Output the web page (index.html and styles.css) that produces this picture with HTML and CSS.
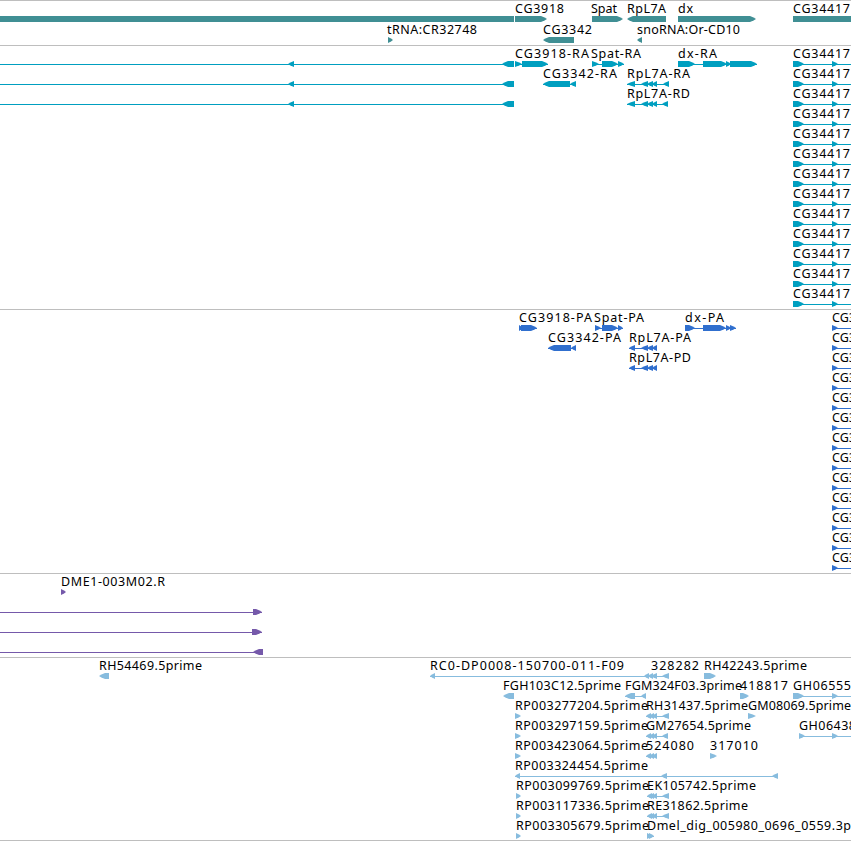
FILE: index.html
```
<!DOCTYPE html>
<html lang="en">
<head>
  <meta charset="UTF-8">
  <title>Genome tracks</title>
  <link rel="stylesheet" href="styles.css">
</head>
<body>
  <main class="tracks">
    <section class="track genes" id="genes"></section>
    <section class="track transcripts" id="transcripts"></section>
    <section class="track proteins" id="proteins"></section>
    <section class="track clones" id="clones"></section>
    <section class="track ests" id="ests"></section>
  </main>
  <script src="tracks.js"></script>
</body>
</html>
```

FILE: styles.css
```
body {
  margin: 0;
  background: #fff;
}
.tracks {
  display: flex;
  flex-direction: column;
  width: 851px;
  height: 840px;
  overflow: hidden;
  border-bottom: 1px solid #bebebe;
}
.track {
  box-sizing: border-box;
  flex: none;
  border-top: 1px solid #bebebe;
}
.track svg {
  display: block;
  width: 100%;
  height: 100%;
}
.track text {
  font-family: "Noto Sans", "DejaVu Sans", sans-serif;
  font-size: 12.5px;
  fill: #000;
}
.genes {
  height: 45px;
  color: #408f94;
}
.transcripts {
  height: 264px;
  color: #009fc0;
}
.proteins {
  height: 264px;
  color: #306fce;
}
.clones {
  height: 84px;
  color: #7559aa;
}
.ests {
  height: 183px;
  color: #87bcde;
}
.exon,
.intron {
  fill: currentColor;
}
.intron {
  shape-rendering: crispEdges;
}
```

FILE: tracks.js
```
const NS = 'http://www.w3.org/2000/svg';
const END = 851;

// feature: [row, direction, exons, label, label start, label end]
// direction: 1 = forward, -1 = reverse, 0 = runs past the view
const rpl = [[627, 635], [641, 648], [647, 653], [652, 657]];
const tracks = {
  genes: [
    [0, 0, [[0, 514]]],
    [0, 1, [[515, 547]], 'CG3918', 515, 564],
    [0, 1, [[592, 623]], 'Spat', 591, 617],
    [0, -1, [[627, 666]], 'RpL7A', 627, 666],
    [0, 1, [[678, 756]], 'dx', 678, 693],
    [0, 0, [[793, END]], 'CG34417', 793, 850],
    [1, 1, [[388, 393]], 'tRNA:CR32748', 387, 477],
    [1, -1, [[543, 574]], 'CG3342', 543, 592],
    [1, -1, [[637, 642]], 'snoRNA:Or-CD10', 637, 740]
  ],
  transcripts: [
    [0, -1, [[-9, 0], [288, 294], [502, 514]]],
    [1, -1, [[-9, 0], [288, 294], [502, 514]]],
    [2, -1, [[-9, 0], [288, 294], [502, 514]]],
    [0, 1, [[515, 522], [522, 548]], 'CG3918-RA', 515, 589],
    [0, 1, [[592, 599], [602, 618], [618, 624]], 'Spat-RA', 591, 641],
    [0, 1, [[678, 695], [703, 727], [726, 731], [730, 757]], 'dx-RA', 678, 717],
    [1, -1, [[543, 570], [570, 576]], 'CG3342-RA', 543, 617],
    [1, -1, [...rpl, [663, 669]], 'RpL7A-RA', 627, 690],
    [2, -1, [...rpl, [662, 668]], 'RpL7A-RD', 627, 690]
  ],
  proteins: [
    [0, 1, [[519, 523], [521, 537]], 'CG3918-PA', 519, 592],
    [0, 1, [[595, 601], [602, 618], [618, 623]], 'Spat-PA', 594, 644],
    [0, 1, [[685, 695], [703, 726], [726, 731], [730, 736]], 'dx-PA', 685, 724],
    [1, -1, [[548, 571], [571, 576]], 'CG3342-PA', 548, 621],
    [1, -1, [[629, 635], ...rpl.slice(1)], 'RpL7A-PA', 629, 691],
    [2, -1, [[629, 635], ...rpl.slice(1)], 'RpL7A-PD', 629, 691]
  ],
  clones: [
    [0, 1, [[61, 66]], 'DME1-003M02.R', 61, 165],
    [1, 1, [[-9, 0], [253, 262]]],
    [2, 1, [[-9, 0], [252, 262]]],
    [3, -1, [[-9, 0], [253, 263]]]
  ],
  ests: [
    [0, -1, [[99, 109]], 'RH54469.5prime', 99, 202],
    [0, -1, [[430, 435], [644, 649]], 'RC0-DP0008-150700-011-F09', 430, 624],
    [0, -1, [[648, 653], [651, 657], [662, 669]], '328282', 651, 699],
    [0, 1, [[704, 716]], 'RH42243.5prime', 704, 807],
    [1, -1, [[503, 514]], 'FGH103C12.5prime', 503, 621],
    [1, -1, [[625, 635], [641, 646]], 'FGM324F03.3prime', 625, 742],
    [1, 1, [[740, 749]], '418817', 740, 788],
    [1, 1, [[793, 804], [832, 838], [860, 870]], 'GH06555', 793, 851],
    [2, 1, [[515, 521]], 'RP003277204.5prime', 515, 648],
    [2, -1, [[646, 651], [649, 654], [652, 657], [662, 669]], 'RH31437.5prime', 646, 748],
    [2, 1, [[748, 756]], 'GM08069.5prime', 748, 851],
    [3, 1, [[515, 521]], 'RP003297159.5prime', 515, 648],
    [3, -1, [[646, 651], [649, 654], [652, 657], [662, 668]], 'GM27654.5prime', 646, 751],
    [3, 1, [[799, 805], [832, 838], [860, 870]], 'GH06438', 799, 856],
    [4, 1, [[515, 521]], 'RP003423064.5prime', 515, 648],
    [4, -1, [[646, 651], [649, 654], [652, 657]], '524080', 646, 694],
    [4, 1, [[710, 717]], '317010', 710, 758],
    [5, -1, [[515, 520], [661, 667], [772, 778]], 'RP003324454.5prime', 515, 648],
    [6, 1, [[516, 521]], 'RP003099769.5prime', 516, 649],
    [6, -1, [[647, 652], [649, 654], [652, 657], [662, 669]], 'EK105742.5prime', 647, 756],
    [7, 1, [[516, 521]], 'RP003117336.5prime', 516, 649],
    [7, -1, [[647, 652], [649, 654], [652, 657], [662, 669]], 'RE31862.5prime', 647, 748],
    [8, 1, [[516, 521]], 'RP003305679.5prime', 516, 649],
    [8, 1, [[647, 652], [649, 654]], 'Dmel_dig_005980_0696_0559.3p', 647, 851]
  ]
};

// CG34417 has the same start in all of its 13 isoforms
for (let row = 0; row < 13; row++) {
  tracks.transcripts.push([row, 1, [[793, 804], [832, 838], [860, 870]], 'CG34417', 793, 850]);
  tracks.proteins.push([row, 1, [[832, 838], [860, 870]], 'CG3', 832, 856]);
}

function add(parent, tag, attrs) {
  const el = document.createElementNS(NS, tag);
  for (const key in attrs) el.setAttribute(key, attrs[key]);
  parent.appendChild(el);
  return el;
}

function arrow(a, b, y, dir) {
  if (!dir) return `M${a} ${y}H${b}V${y + 6}H${a}Z`;
  const width = b - a;
  const head = width <= 8 ? width : 6;
  // tail, neck, shoulder and tip, mirrored for reverse features
  const tail = dir > 0 ? a : b;
  const tip = dir > 0 ? b : a;
  const neck = tip - dir * head;
  const shoulder = tip - dir * head * 0.4;
  return `M${tail} ${y}H${neck}L${shoulder} ${y + 1.5}L${tip} ${y + 3}L${shoulder} ${y + 4.5}L${neck} ${y + 6}H${tail}Z`;
}

for (const id in tracks) {
  const svg = add(document.getElementById(id), 'svg', {});
  const pitch = id === 'genes' ? 21 : 20;
  tracks[id].forEach(([row, dir, exons, label, from, to]) => {
    const y = row * pitch + 15;
    const start = exons[0][0];
    const end = exons[exons.length - 1][1];
    if (exons.length > 1) {
      add(svg, 'rect', { class: 'intron', x: start, y: y + 3, width: end - start, height: 1 });
    }
    exons.forEach(([a, b]) => add(svg, 'path', { class: 'exon', d: arrow(a, b, y, dir) }));
    if (label) {
      const text = add(svg, 'text', { x: from, y: y - 3, textLength: to - from });
      text.textContent = label;
    }
  });
}
```
